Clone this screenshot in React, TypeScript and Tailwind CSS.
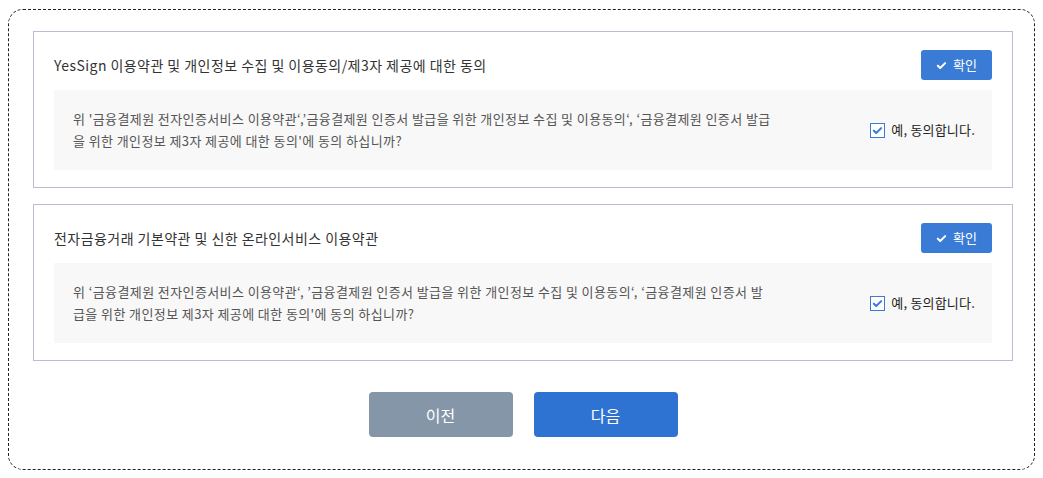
import { useState } from 'react'

const font = { fontFamily: '"Noto Sans CJK KR", "Noto Sans", sans-serif' }

type Term = {
  title: string
  lines: string[]
}

const terms: Term[] = [
  {
    title: 'YesSign 이용약관 및 개인정보 수집 및 이용동의/제3자 제공에 대한 동의',
    lines: [
      "위 '금융결제원 전자인증서비스 이용약관‘,’금융결제원 인증서 발급을 위한 개인정보 수집 및 이용동의‘, ‘금융결제원 인증서 발급",
      "을 위한 개인정보 제3자 제공에 대한 동의'에 동의 하십니까?",
    ],
  },
  {
    title: '전자금융거래 기본약관 및 신한 온라인서비스 이용약관',
    lines: [
      "위 ‘금융결제원 전자인증서비스 이용약관‘, ’금융결제원 인증서 발급을 위한 개인정보 수집 및 이용동의‘, ‘금융결제원 인증서 발",
      "급을 위한 개인정보 제3자 제공에 대한 동의'에 동의 하십니까?",
    ],
  },
]

const Check = ({ className }: { className?: string }) => (
  <svg viewBox="0 0 12 12" className={className} fill="none">
    <path d="M2 6.2l2.6 2.6L10 3.4" stroke="currentColor" strokeWidth="2.2" strokeLinecap="round" strokeLinejoin="round" />
  </svg>
)

const TermCard = ({ title, lines }: Term) => {
  const [agreed, setAgreed] = useState(true)
  return (
    <div className="border border-[#b9bdd4] px-5 pt-[18px] pb-[17px]">
      <div className="flex items-center justify-between">
        <h3 className="text-[14px] text-[#333] leading-[20px] tracking-[0.45px]">{title}</h3>
        <button className="flex items-center gap-[6px] h-[30px] w-[71px] justify-center rounded-[3px] bg-[#3a7bd5] text-white text-[13px]">
          <Check className="w-[11px] h-[11px]" />
          확인
        </button>
      </div>
      <div className="mt-[10px] h-[80px] bg-[#f8f8f8] flex items-center justify-between pl-[19px] pr-[17px]">
        <p className="text-[13px] leading-[22px] text-[#555] whitespace-nowrap tracking-[0.4px]">
          {lines[0]}
          <br />
          {lines[1]}
        </p>
        <label className="flex items-center gap-[6px] text-[13px] text-[#222] cursor-pointer tracking-[0.2px]">
          <span
            onClick={() => setAgreed(!agreed)}
            className="w-[15px] h-[15px] border border-[#3a7bd5] bg-white flex items-center justify-center text-[#3a7bd5]"
          >
            {agreed && <Check className="w-[11px] h-[11px]" />}
          </span>
          예, 동의합니다.
        </label>
      </div>
    </div>
  )
}

export default function App() {
  return (
    <div className="bg-white min-h-[478px] pt-[9px] pl-2" style={font}>
      <div className="w-[1027px] h-[461px] border border-dashed border-[#222] rounded-[15px] pl-6 pr-[21px] pt-[21px]">
        <div className="flex flex-col gap-4">
          {terms.map((t) => (
            <TermCard key={t.title} {...t} />
          ))}
        </div>
        <div className="flex justify-center gap-[21px] mt-[31px]">
          <button className="w-[144px] h-[45px] rounded-[4px] bg-[#8596a9] text-white text-[16px]">이전</button>
          <button className="w-[144px] h-[45px] rounded-[4px] bg-[#2e72d2] text-white text-[16px]">다음</button>
        </div>
      </div>
    </div>
  )
}
